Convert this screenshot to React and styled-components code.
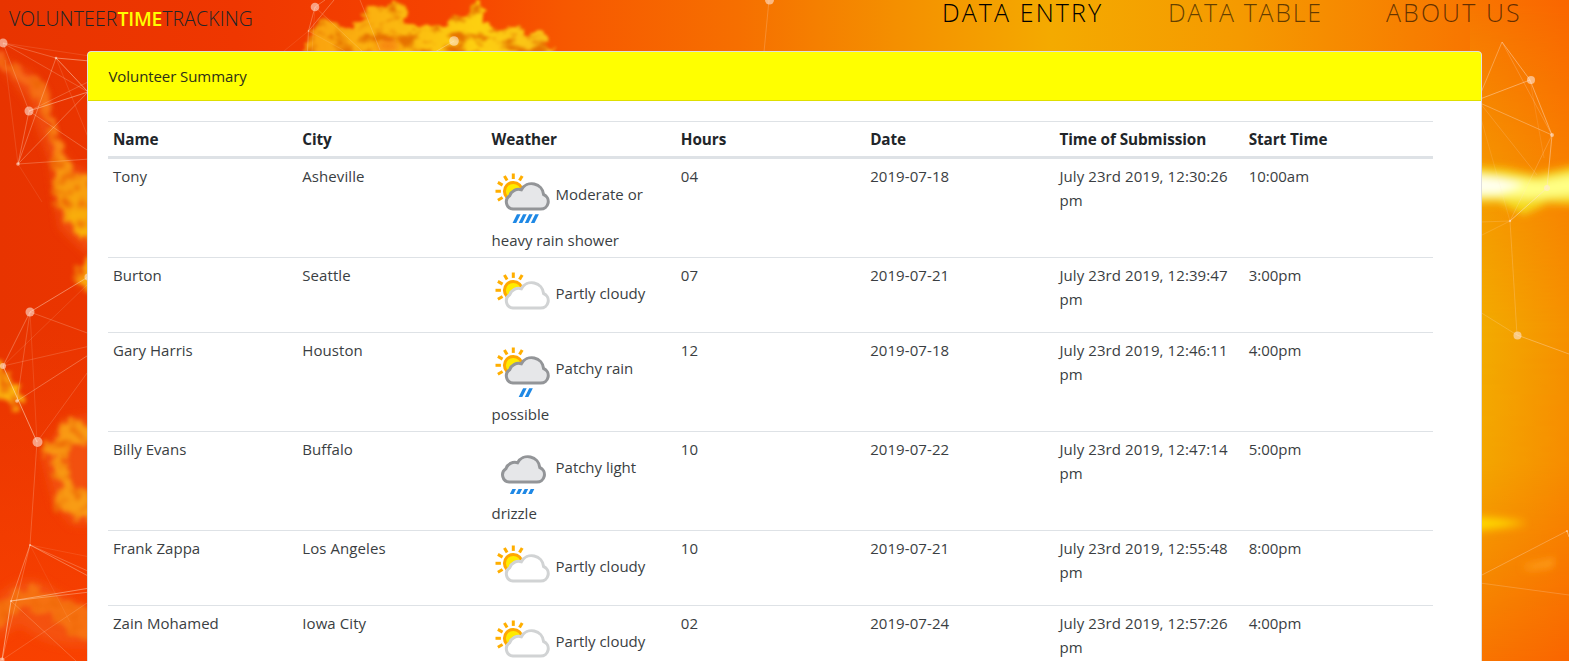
import React from 'react';
import styled, { createGlobalStyle } from 'styled-components';

const GlobalStyle = createGlobalStyle`
  *, *::before, *::after { box-sizing: border-box; }
  html, body { margin: 0; padding: 0; height: 100%; overflow: hidden; }
  body {
    font-family: "Open Sans", "Noto Sans", sans-serif;
    font-size: 15px;
    font-weight: 400;
    line-height: 24px;
    color: #212529;
    background: #f04000;
  }
`;

const Page = styled.div`
  position: relative;
  width: 100%;
  height: 661px;
  overflow: hidden;
`;

const Backdrop = styled.svg`
  position: absolute;
  inset: 0;
  width: 1569px;
  height: 661px;
`;

const Content = styled.div`
  position: relative;
`;

const Navbar = styled.header`
  display: flex;
  justify-content: space-between;
  height: 51px;
  padding: 0 48px 0 9px;
`;

const Brand = styled.div`
  padding-top: 7px;
  font-size: 19.4px;
  font-weight: 350;
  letter-spacing: 0.16px;
  white-space: nowrap;
`;

const Highlight = styled.span`
  color: #ffff00;
  font-weight: 600;
  letter-spacing: -0.2px;
`;

const Nav = styled.nav`
  display: flex;
  gap: 64px;
`;

const NavLink = styled.a`
  width: ${(p) => p.$width}px;
  font-size: 25px;
  font-weight: 350;
  line-height: 25px;
  letter-spacing: ${(p) => p.$tracking}px;
  white-space: nowrap;
  color: ${(p) => (p.$active ? '#000' : 'rgba(0,0,0,0.6)')};
`;

const Card = styled.main`
  width: 1395px;
  height: 720px;
  margin-left: 87px;
  background: #fff;
  border: 1px solid #dfdfdf;
  border-radius: 4px;
  overflow: hidden;
`;

const CardHeader = styled.div`
  height: 49px;
  padding: 12px 20.5px;
  background: #ffff00;
  border-bottom: 1px solid #dfdf00;
  color: #2d3019;
  letter-spacing: -0.08px;
`;

const CardBody = styled.div`
  padding: 20px 20px;
`;

const Table = styled.table`
  width: 1325px;
  table-layout: fixed;
  border-spacing: 0;
`;

const HeadCell = styled.th`
  height: 38px;
  padding: 1px 5px 1px;
  border-top: 1px solid #dee2e6;
  border-bottom: 3px solid #dee2e6;
  text-align: left;
  font-weight: 680;
  font-size: 15.3px;
  letter-spacing: -0.08px;
  line-height: 32px;
  white-space: nowrap;
`;

const Row = styled.tr`
  height: ${(p) => p.$height}px;
`;

const Cell = styled.td`
  padding: 5px 5px 4px;
  border-bottom: 1px solid #dee2e6;
  vertical-align: top;
  color: #3a3e42;
  letter-spacing: ${(p) => p.$tracking ?? -0.02}px;
`;

const Icon = styled.svg`
  width: 64px;
  height: 64px;
  vertical-align: middle;
`;

const CLOUD =
  'M22 45.8 H49.5 A7.6 7.6 0 0 0 52.6 31.2 A11.9 11.9 0 0 0 30.4 26.4 A9.6 9.6 0 0 0 18.7 32.4 A7.3 7.3 0 0 0 22 45.8 Z';

function Sun() {
  return (
    <g>
      <circle cx="22.3" cy="28" r="8.9" fill="#ffeb00" stroke="#ffa800" strokeWidth="3" />
      {[-120, -90, -60, -30, 0, 30].map((angle) => (
        <path
          key={angle}
          d="M22.3 10.2 V15.6"
          stroke="#ffae00"
          strokeWidth="3"
          transform={`rotate(${angle} 22.3 28)`}
        />
      ))}
    </g>
  );
}

function Drops({ x, count, top, bottom }) {
  const slant = (bottom - top) * 0.5;
  return Array.from({ length: count }, (_, i) => {
    const left = x + i * 6.1;
    return (
      <path
        key={i}
        fill="#1e88e5"
        d={`M${left} ${bottom} L${left + slant} ${top} h3.6 L${left + 3.6} ${bottom} Z`}
      />
    );
  });
}

function WeatherIcon({ kind }) {
  const clear = kind === 'partly';
  return (
    <Icon viewBox="1 0.7 64 64" aria-hidden="true">
      {kind !== 'drizzle' && <Sun />}
      <path
        d={CLOUD}
        fill={clear ? '#fff' : '#e6e7e9'}
        stroke={clear ? '#d1d3d4' : '#939598'}
        strokeWidth="3"
        transform={kind === 'drizzle' ? 'translate(-3.8 0)' : undefined}
      />
      {kind === 'shower' && <Drops x={21.6} count={4} top={51} bottom={59.7} />}
      {kind === 'patchy' && <Drops x={27.7} count={2} top={51} bottom={59.8} />}
      {kind === 'drizzle' && <Drops x={18.9} count={4} top={52.6} bottom={57.6} />}
    </Icon>
  );
}

const NODES = [
  [3, 43, 4.5], [56, 58, 1.3], [29, 111, 4.5], [18, 164, 1.8], [30, 312, 4.5], [3, 366, 3],
  [17, 401, 1.8], [37.5, 442, 5], [30, 545, 1], [11, 601, 1], [2, 660, 2.5], [88, 277, 3.5],
  [315, 7, 4.3], [308.5, 31, 0.8], [454, 41, 4.8], [769.5, 0, 4.5],
  [1531, 80, 4], [1552, 135, 2], [1547, 188, 3], [1510, 221, 1.2], [1517.5, 335.5, 4], [1567, 531, 1],
];

const LINKS = [
  [3, 43, 56, 58, 0.3], [3, 43, 90, 93, 0.25], [3, 43, 29, 111, 0.25], [3, 43, 90, 56, 0.15],
  [56, 58, 90, 61, 0.5], [56, 58, 88, 92, 0.55], [56, 58, 18, 164, 0.35], [56, 58, 90, 142, 0.15],
  [29, 111, 88, 92, 0.5], [29, 111, 90, 81, 0.25], [29, 111, 18, 164, 0.35], [29, 111, 90, 152, 0.3],
  [18, 164, 88, 92, 0.35], [18, 164, 90, 159, 0.3], [5, 60, 18, 164, 0.15], [18, 164, 42, 202, 0.12],
  [30, 312, 88, 277, 0.5], [30, 312, 90, 334, 0.25], [30, 312, 3, 366, 0.35], [30, 312, 17, 401, 0.25],
  [30, 312, 37, 442, 0.15], [3, 366, 90, 346, 0.2], [3, 366, 88, 284, 0.15], [3, 366, 37, 442, 0.6],
  [17, 401, 90, 354, 0.35], [37, 442, 90, 369, 0.2], [37, 442, 30, 545, 0.25],
  [30, 545, 90, 577, 0.4], [30, 545, 90, 572, 0.3], [30, 545, 90, 557, 0.12], [30, 545, 11, 601, 0.4],
  [30, 545, 2, 660, 0.25], [30, 545, 70, 622, 0.1], [11, 601, 90, 588, 0.5], [11, 601, 90, 592, 0.4],
  [11, 601, 2, 660, 0.6], [11, 601, 76, 661, 0.25], [2, 660, 90, 601, 0.2],
  [315, 7, 308.5, 31, 0.35], [315, 7, 362, 51, 0.22], [334, 0, 308.5, 31, 0.35], [325, 0, 315, 7, 0.35],
  [308.5, 31, 307.5, 51, 0.3], [308.5, 31, 345, 51, 0.15], [308.5, 31, 284, 51, 0.12],
  [360, 0, 380, 50, 0.25], [315, 7, 312, 51, 0.12],
  [454, 41, 435, 52, 0.4], [769, 0, 764, 52, 0.25],
  [1502, 42, 1480, 95, 0.4], [1502, 42, 1530, 80, 0.5], [1502, 42, 1552, 135, 0.25],
  [1530, 80, 1480, 99, 0.5], [1530, 80, 1552, 135, 0.5], [1530, 80, 1544, 158, 0.15],
  [1480, 103, 1552, 135, 0.4], [1480, 103, 1537, 175, 0.2], [1480, 115, 1510, 221, 0.15],
  [1552, 135, 1547, 188, 0.5], [1552, 135, 1510, 221, 0.25], [1547, 188, 1510, 221, 0.6],
  [1510, 221, 1480, 222, 0.2], [1510, 221, 1480, 236, 0.2], [1510, 221, 1517, 335, 0.25],
  [1517, 335, 1480, 312, 0.25], [1517, 335, 1569, 354, 0.4], [1567, 531, 1480, 576, 0.35],
  [1480, 583, 1569, 595, 0.25], [1567, 531, 1569, 537, 0.5],
];

function Sky() {
  return (
    <Backdrop viewBox="0 0 1569 661" aria-hidden="true">
      <defs>
        <linearGradient id="base">
          <stop offset="0" stopColor="#e83400" />
          <stop offset="0.15" stopColor="#ef3700" />
          <stop offset="0.29" stopColor="#f64400" />
          <stop offset="0.36" stopColor="#f75800" />
          <stop offset="0.47" stopColor="#f66f00" />
          <stop offset="0.57" stopColor="#f48f00" />
          <stop offset="0.67" stopColor="#f4aa00" />
          <stop offset="0.79" stopColor="#f59a00" />
          <stop offset="0.9" stopColor="#f77f00" />
          <stop offset="1" stopColor="#fa6600" />
        </linearGradient>
        <linearGradient id="right">
          <stop offset="0" stopColor="#f2af00" />
          <stop offset="1" stopColor="#f69000" />
        </linearGradient>
        <linearGradient id="fade" x2="0" y2="1">
          <stop offset="0" stopColor="#fff" stopOpacity="0" />
          <stop offset="0.3" stopColor="#fff" stopOpacity="0.7" />
          <stop offset="0.5" stopColor="#fff" />
          <stop offset="0.7" stopColor="#fff" stopOpacity="0.9" />
          <stop offset="1" stopColor="#fff" stopOpacity="0" />
        </linearGradient>
        <mask id="rightMask">
          <rect x="1470" width="99" height="661" fill="url(#fade)" />
        </mask>
        <linearGradient id="lowLeft" x2="0" y2="1">
          <stop offset="0" stopColor="#fc4400" stopOpacity="0" />
          <stop offset="1" stopColor="#fc4400" stopOpacity="0.8" />
        </linearGradient>
        <linearGradient id="streak" gradientUnits="userSpaceOnUse" x1="0" y1="50" x2="0" y2="235">
          <stop offset="0" stopColor="#f5601a" />
          <stop offset="0.5" stopColor="#f98416" />
          <stop offset="0.75" stopColor="#f8a00e" />
          <stop offset="1" stopColor="#f9b40a" />
        </linearGradient>
        <linearGradient id="plume" gradientUnits="userSpaceOnUse" x1="300" y1="0" x2="550" y2="0">
          <stop offset="0" stopColor="#faa00e" />
          <stop offset="0.35" stopColor="#fbb610" />
          <stop offset="0.7" stopColor="#fdd010" />
          <stop offset="1" stopColor="#f9bd18" />
        </linearGradient>
        <filter id="rough" x="-20%" y="-20%" width="140%" height="140%" colorInterpolationFilters="sRGB">
          <feTurbulence type="fractalNoise" baseFrequency="0.1" numOctaves="3" seed="8" result="noise" />
          <feColorMatrix
            in="noise"
            values="0 0 0 0 0.93  0 0 0 0 0.4  0 0 0 0 0.02  3.5 0 0 0 -1.6"
            result="spots"
          />
          <feDisplacementMap in="SourceGraphic" in2="noise" scale="20" xChannelSelector="R" yChannelSelector="G" result="shape" />
          <feComposite in="spots" in2="shape" operator="in" result="inside" />
          <feMerge result="both">
            <feMergeNode in="shape" />
            <feMergeNode in="inside" />
          </feMerge>
          <feGaussianBlur in="both" stdDeviation="2.3" />
        </filter>
        <filter id="mottle" x="-10%" y="-10%" width="120%" height="120%" colorInterpolationFilters="sRGB">
          <feTurbulence type="fractalNoise" baseFrequency="0.06 0.09" numOctaves="4" seed="5" result="noise" />
          <feColorMatrix
            in="noise"
            values="0 0 0 0 0.9  0 0 0 0 0.45  0 0 0 0 0  4 0 0 0 -1.9"
            result="spots"
          />
          <feDisplacementMap in="SourceGraphic" in2="noise" scale="18" xChannelSelector="R" yChannelSelector="G" result="shape" />
          <feComposite in="spots" in2="shape" operator="in" result="inside" />
          <feMerge result="both">
            <feMergeNode in="shape" />
            <feMergeNode in="inside" />
          </feMerge>
          <feGaussianBlur in="both" stdDeviation="1.4" />
        </filter>
        <filter id="soft" x="-30%" y="-50%" width="160%" height="200%">
          <feGaussianBlur stdDeviation="5" />
        </filter>
        <filter id="glow" x="-30%" y="-50%" width="160%" height="200%">
          <feGaussianBlur stdDeviation="3 4.5" />
        </filter>
      </defs>

      <rect width="1569" height="661" fill="url(#base)" />
      <rect x="1470" width="99" height="661" fill="url(#right)" mask="url(#rightMask)" />
      <rect y="330" width="90" height="331" fill="url(#lowLeft)" />

      <path
        filter="url(#mottle)"
        fill="url(#plume)"
        d="M300 62 L306 46 L318 26 L326 20 L346 26 L360 20 L368 12 L362 4 L384 6 L400 2 L408 10 L402 22 L414 30 L436 28 L448 20 L464 18 L478 2 L486 8 L482 22 L496 30 L520 27 L540 36 L552 48 L556 62 Z"
      />
      <g filter="url(#soft)" fill="#f45a14" opacity="0.7">
        <path d="M-8 55 L30 72 L46 92 L54 140 L72 165 L94 175 V260 L60 228 L50 160 L28 100 Z" />
        <path d="M-5 600 Q25 566 55 590 L92 610 V645 Q50 650 20 625 L-5 640 Z" />
        <path d="M92 415 L65 420 L42 455 L55 505 L72 525 H92 Z" />
        <ellipse cx="388" cy="46" rx="12" ry="5" />
      </g>
      <g filter="url(#rough)">
        <path
          fill="url(#streak)"
          d="M-8 48 L14 64 L26 74 L36 76 L48 84 L50 102 L60 142 L64 158 L80 176 L96 176 V248 L78 236 L62 214 L54 190 L54 160 L46 122 L38 98 L24 86 L10 76 L-8 62 Z"
        />
        <path fill="#faab0e" d="M98 254 L82 260 L76 280 L82 292 L98 298 Z" />
        <path fill="#fbb40e" d="M-10 350 L3 368 L20 391 L22 408 L12 408 L-10 392 Z" />
        <path
          fill="#f99c14"
          d="M60 424 L68 418 L80 420 L98 426 L98 440 L76 444 L66 458 L72 482 L98 502 L98 524 L62 514 L54 500 L62 484 L50 466 L54 456 L42 456 L44 446 L56 440 Z"
        />
        <path fill="#f78414" d="M-8 608 L18 590 L35 588 L64 600 L98 614 V640 L72 636 L50 618 L24 606 L-8 632 Z" opacity="0.65" />
      </g>

      <g filter="url(#glow)">
        <path d="M1460 166 L1505 169 L1535 175 L1585 164 V205 L1548 203 L1524 214 L1498 202 L1460 203 Z" fill="#f5dc1c" />
        <path d="M1460 172 L1510 178 L1540 181 L1585 173 V194 L1530 198 L1500 197 L1460 197 Z" fill="#ffff84" />
        <path d="M1460 175 L1498 179 L1525 185 L1498 193 L1460 194 Z" fill="#fffff0" />
      </g>
      <g filter="url(#glow)">
        <path d="M1465 516 L1500 519 L1528 523 L1504 527 L1465 532 Z" fill="#ffda00" />
        <path d="M1520 567 L1538 563 L1556 559 L1552 566 L1532 569 Z" fill="#ffa820" />
      </g>

      <g stroke="#ffe3cc" strokeWidth="1">
        {LINKS.map(([x1, y1, x2, y2, o], i) => (
          <line key={i} x1={x1} y1={y1} x2={x2} y2={y2} strokeOpacity={o * 0.9} />
        ))}
      </g>
      <g fill="#ffe8dc" fillOpacity="0.58">
        {NODES.map(([x, y, r], i) => (
          <circle key={i} cx={x} cy={y} r={r} />
        ))}
      </g>
    </Backdrop>
  );
}

const COLUMNS = ['Name', 'City', 'Weather', 'Hours', 'Date', 'Time of Submission', 'Start Time'];

const ENTRIES = [
  ['Tony', 'Asheville', 'shower', 'Moderate or heavy rain shower', '04', '2019-07-18', '12:30:26', '10:00am', 99],
  ['Burton', 'Seattle', 'partly', 'Partly cloudy', '07', '2019-07-21', '12:39:47', '3:00pm', 75],
  ['Gary Harris', 'Houston', 'patchy', 'Patchy rain possible', '12', '2019-07-18', '12:46:11', '4:00pm', 99],
  ['Billy Evans', 'Buffalo', 'drizzle', 'Patchy light drizzle', '10', '2019-07-22', '12:47:14', '5:00pm', 99],
  ['Frank Zappa', 'Los Angeles', 'partly', 'Partly cloudy', '10', '2019-07-21', '12:55:48', '8:00pm', 75],
  ['Zain Mohamed', 'Iowa City', 'partly', 'Partly cloudy', '02', '2019-07-24', '12:57:26', '4:00pm', 75],
];

export default function App() {
  return (
    <Page>
      <GlobalStyle />
      <Sky />
      <Content>
        <Navbar>
          <Brand>
            VOLUNTEER<Highlight>TIME</Highlight>TRACKING
          </Brand>
          <Nav>
            <NavLink $active $width={162} $tracking={2.1}>DATA ENTRY</NavLink>
            <NavLink $width={154} $tracking={1.7}>DATA TABLE</NavLink>
            <NavLink $width={135} $tracking={2.1}>ABOUT US</NavLink>
          </Nav>
        </Navbar>
        <Card>
          <CardHeader>Volunteer Summary</CardHeader>
          <CardBody>
            <Table>
              <thead>
                <tr>
                  {COLUMNS.map((title) => (
                    <HeadCell key={title}>{title}</HeadCell>
                  ))}
                </tr>
              </thead>
              <tbody>
                {ENTRIES.map(([name, city, kind, weather, hours, date, time, start, height]) => (
                  <Row key={name} $height={height}>
                    <Cell $tracking={0.04}>{name}</Cell>
                    <Cell $tracking={0.08}>{city}</Cell>
                    <Cell>
                      <WeatherIcon kind={kind} />
                      {weather}
                    </Cell>
                    <Cell $tracking={0}>{hours}</Cell>
                    <Cell $tracking={0.08}>{date}</Cell>
                    <Cell $tracking={0.08}>July 23rd 2019, {time} pm</Cell>
                    <Cell>{start}</Cell>
                  </Row>
                ))}
              </tbody>
            </Table>
          </CardBody>
        </Card>
      </Content>
    </Page>
  );
}
